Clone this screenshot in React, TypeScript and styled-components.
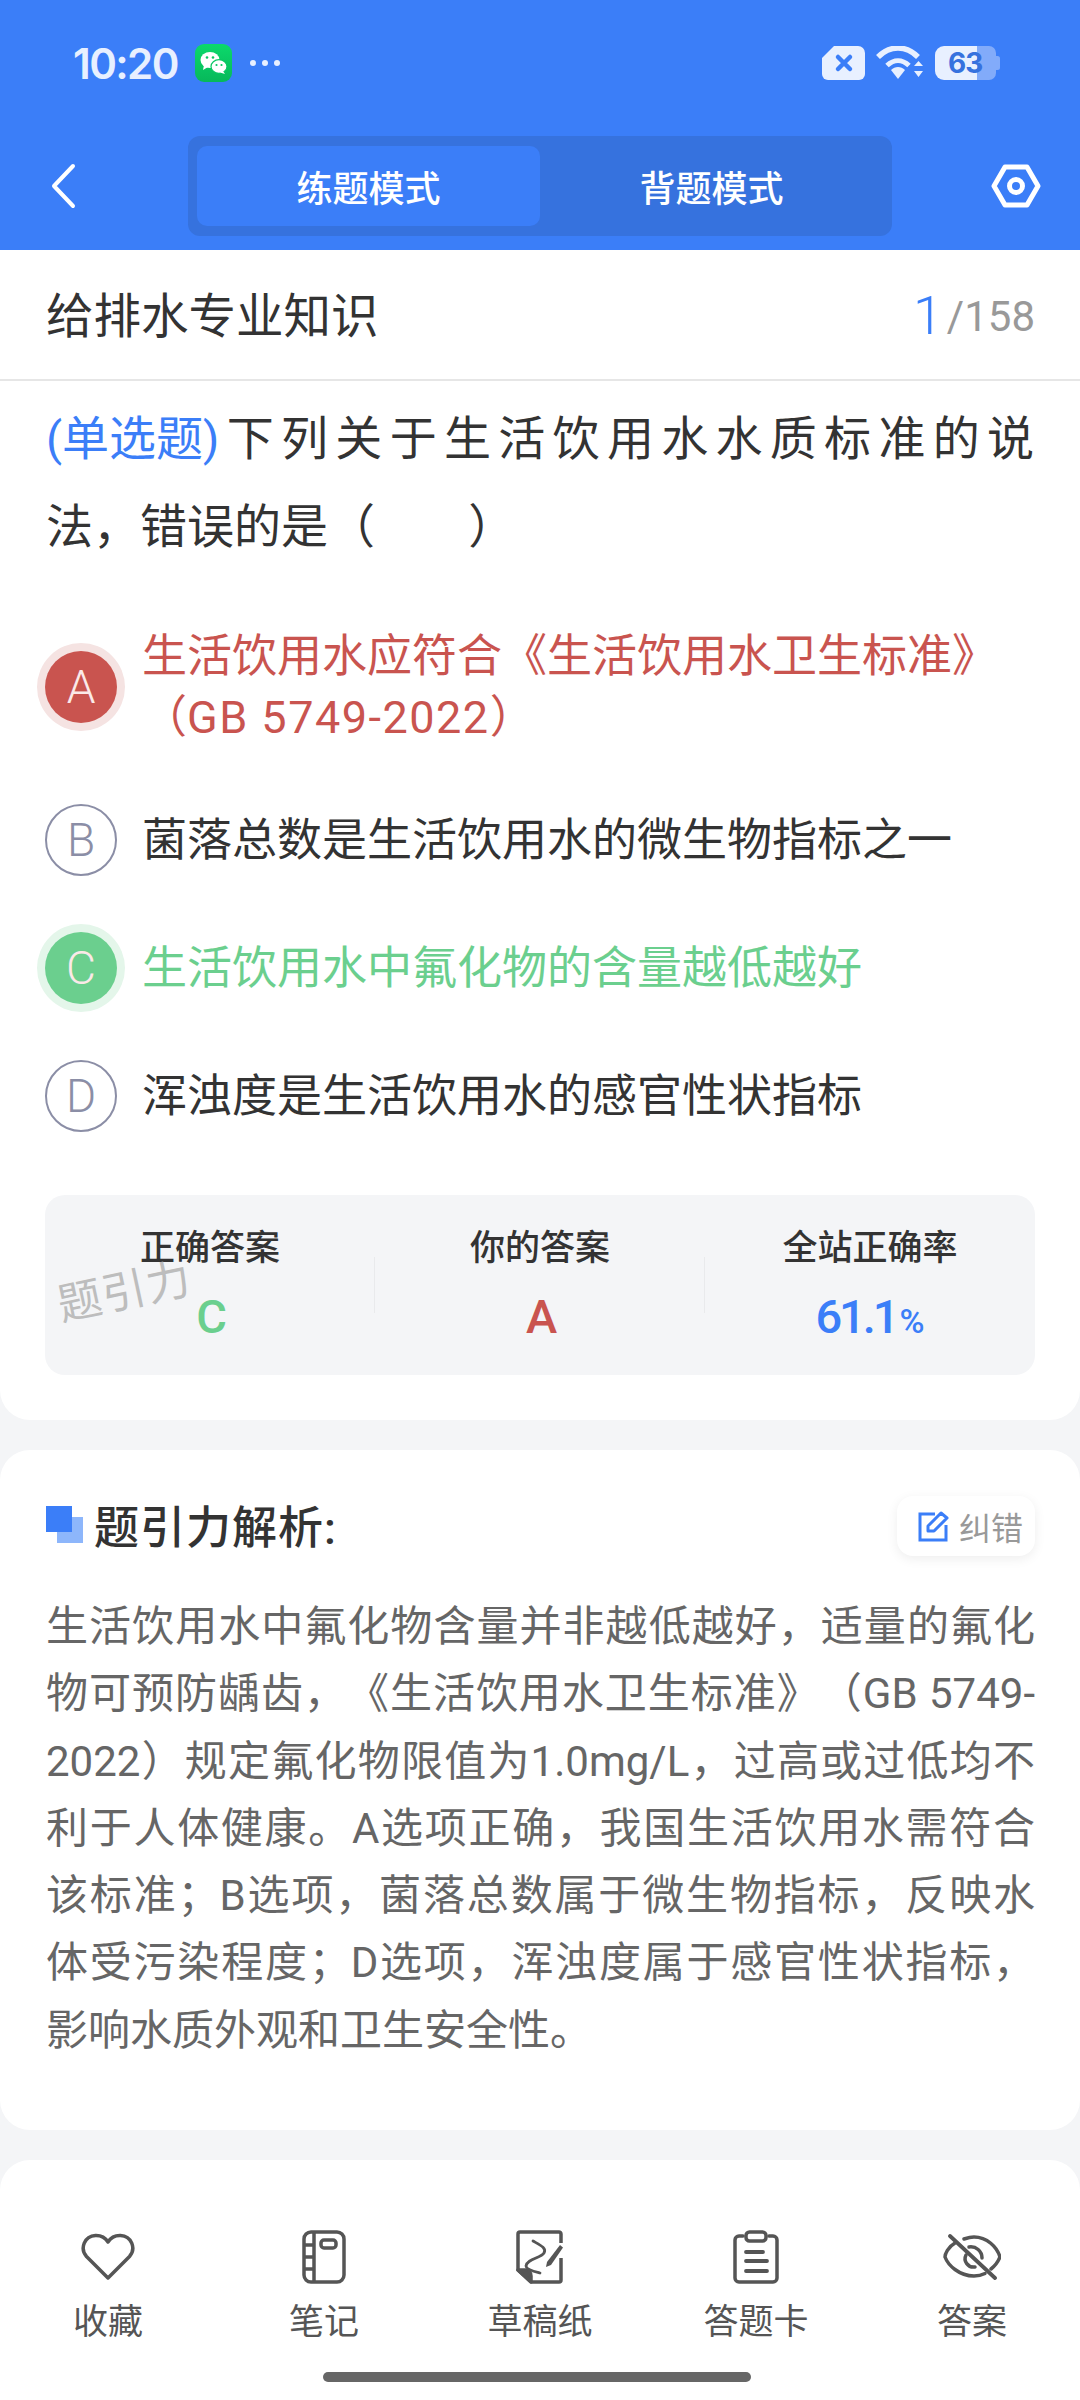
import React from "react";
import styled, { createGlobalStyle } from "styled-components";

const FONT = `Roboto, "Noto Sans CJK SC", "Noto Sans", sans-serif`;
const BLUE = "#3B7EF8";
const RED = "#C9544F";
const GREEN = "#6BCF8E";

const Global = createGlobalStyle`
  html, body { margin: 0; padding: 0; background: #F4F5F7; }
  body { font-family: ${FONT}; text-spacing-trim: space-all; }
  * { box-sizing: border-box; }
`;

const Page = styled.div`
  width: 1080px;
  height: 2400px;
  overflow: hidden;
  display: flex;
  flex-direction: column;
  background: #f4f5f7;
`;
const Header = styled.header`
  background: ${BLUE};
  height: 250px;
  display: flex;
  flex-direction: column;
`;
const StatusBar = styled.div`
  height: 124px;
  padding: 2px 80px 0 73px;
  display: flex;
  align-items: center;
  justify-content: space-between;
  color: #e8f0ff;
`;
const StatusGroup = styled.div<{ $gap: number }>`
  display: flex;
  align-items: center;
  gap: ${(p) => p.$gap}px;
`;
const Time = styled.span`
  font-family: Inter, sans-serif;
  font-size: 42px;
  font-weight: 600;
  letter-spacing: -1.6px;
`;
const BatteryBox = styled.div`
  position: relative;
  display: flex;
  width: 65px;
  height: 34px;
`;
const BatteryLevel = styled.span`
  position: absolute;
  left: 13px;
  top: 0;
  line-height: 34px;
  font-family: Inter, sans-serif;
  font-size: 28px;
  font-weight: 700;
  letter-spacing: -1px;
  color: #3672de;
`;
const NavBar = styled.nav`
  height: 126px;
  padding: 12px 39px 14px 50px;
  display: flex;
  align-items: center;
`;
const Segment = styled.div`
  width: 704px;
  height: 100px;
  margin: 0 auto 0 112px;
  padding: 10px 9px;
  display: flex;
  background: #3672de;
  border-radius: 12px;
`;
const SegmentTab = styled.div<{ $active?: boolean }>`
  flex: 1;
  display: flex;
  align-items: center;
  justify-content: center;
  border-radius: 10px;
  font-size: 36px;
  font-weight: 500;
  color: #fff;
  background: ${(p) => (p.$active ? BLUE : "transparent")};
`;
const QuestionCard = styled.section`
  height: 1170px;
  background: #fff;
  border-radius: 0 0 30px 30px;
`;
const TitleRow = styled.div`
  height: 131px;
  padding: 0 45px 4px 46px;
  border-bottom: 2px solid #e6e6e6;
  display: flex;
  align-items: center;
  justify-content: space-between;
`;
const Subject = styled.h1`
  margin: 0;
  font-size: 47.5px;
  font-weight: 400;
  color: #333;
`;
const Counter = styled.div`
  display: flex;
  align-items: baseline;
  font-size: 42px;
  color: #999;
`;
const CounterCurrent = styled.span`
  font-size: 54px;
  font-weight: 300;
  color: ${BLUE};
  margin-right: 4px;
  transform: translateY(3px);
`;
const Question = styled.div`
  margin: 14px 46px 0;
  font-size: 47px;
  line-height: 88px;
  color: #333;
`;
const QuestionLine = styled.div<{ $justify?: boolean }>`
  text-align: ${(p) => (p.$justify ? "justify" : "left")};
  text-align-last: ${(p) => (p.$justify ? "justify" : "left")};
`;
const QuestionType = styled.span`
  display: inline-block;
  color: ${BLUE};
`;
const Options = styled.div`
  margin-top: 55px;
  padding: 0 45px;
  display: flex;
  flex-direction: column;
  gap: 56px;
`;
const Option = styled.div`
  display: flex;
  align-items: center;
  gap: 25px;
`;
const Bubble = styled.div<{ $tone?: "red" | "green" }>`
  flex: none;
  width: 72px;
  height: 72px;
  border-radius: 50%;
  display: flex;
  align-items: center;
  justify-content: center;
  font-family: Roboto, sans-serif;
  font-size: 46px;
  font-weight: 300;
  color: ${(p) => (p.$tone ? "#fbe9e8" : "#8B8EA6")};
  background: ${(p) => (p.$tone === "red" ? RED : p.$tone === "green" ? GREEN : "#fff")};
  border: ${(p) => (p.$tone ? "none" : "2px solid #8B8EA6")};
  box-shadow: ${(p) =>
    p.$tone === "red"
      ? "0 0 0 8px #F5E3E2"
      : p.$tone === "green"
      ? "0 0 0 8px #E4F6EA"
      : "none"};
`;
const OptionText = styled.div<{ $tone?: "red" | "green" }>`
  flex: 1;
  font-size: 45px;
  line-height: 61px;
  color: ${(p) => (p.$tone === "red" ? RED : p.$tone === "green" ? GREEN : "#333")};
`;
const LatinRun = styled.span`
  letter-spacing: 1.5px;
`;
const StatBox = styled.div`
  position: relative;
  margin: 63px 45px 0;
  height: 180px;
  background: #f4f5f7;
  border-radius: 20px;
  display: grid;
  grid-template-columns: repeat(3, 1fr);
  align-items: center;
`;
const Stat = styled.div<{ $divider?: boolean }>`
  height: 100%;
  padding-top: 32px;
  display: flex;
  flex-direction: column;
  align-items: center;
  gap: 19px;
  position: relative;
  &::after {
    content: "";
    display: ${(p) => (p.$divider ? "block" : "none")};
    position: absolute;
    right: 0;
    top: 62px;
    bottom: 62px;
    width: 1px;
    background: #e9eaec;
  }
`;
const StatLabel = styled.span`
  font-size: 35px;
  font-weight: 500;
  line-height: 44px;
  color: #333;
`;
const StatValue = styled.span<{ $color: string }>`
  font-size: 47px;
  line-height: 54px;
  font-weight: 500;
  letter-spacing: -3px;
  color: ${(p) => p.$color};
`;
const Percent = styled.small`
  font-size: 34px;
  letter-spacing: 0;
  margin-left: 3px;
`;
const Watermark = styled.span`
  position: absolute;
  left: 12px;
  top: 72px;
  font-size: 44px;
  line-height: 50px;
  color: #bdbdbd;
  transform: rotate(-12deg);
  letter-spacing: 1px;
`;
const AnalysisCard = styled.section`
  margin-top: 30px;
  height: 680px;
  padding: 46px 45px 0 46px;
  background: #fff;
  border-radius: 30px;
`;
const AnalysisHead = styled.div`
  height: 60px;
  display: flex;
  align-items: center;
  justify-content: space-between;
`;
const AnalysisTitle = styled.h2`
  margin: -4px 0 0;
  display: flex;
  align-items: center;
  gap: 11px;
  font-size: 45px;
  font-weight: 500;
  letter-spacing: 1px;
  color: #333;
`;
const ReportButton = styled.div`
  width: 138px;
  height: 60px;
  padding-left: 21px;
  display: flex;
  align-items: center;
  gap: 9px;
  border-radius: 16px;
  background: #fff;
  box-shadow: 0 3px 12px rgba(0, 0, 0, 0.07);
  font-size: 32px;
  color: #999;
`;
const AnalysisBody = styled.p`
  margin: 37px 0 0;
  font-size: 42px;
  line-height: 67.3px;
  color: #666;
  text-align: justify;
`;
const BottomBar = styled.footer`
  margin-top: 30px;
  flex: 1;
  background: #fff;
  border-radius: 30px 30px 0 0;
  padding-top: 69px;
  display: flex;
  flex-direction: column;
`;
const Tools = styled.div`
  display: grid;
  grid-template-columns: repeat(5, 216px);
`;
const Tool = styled.div`
  display: flex;
  flex-direction: column;
  align-items: center;
  gap: 15px;
  font-size: 35px;
  line-height: 46px;
  color: #555;
`;
const ToolIcon = styled.div`
  height: 56px;
  display: flex;
  align-items: center;
  justify-content: center;
`;
const HomeBar = styled.div`
  align-self: center;
  margin-top: 26px;
  margin-left: -6px;
  width: 428px;
  height: 10px;
  border-radius: 5px;
  background: #666;
`;

const WeChat = () => (
  <svg width="37" height="38" viewBox="0 0 37 38">
    <defs>
      <linearGradient id="wc" x1="0" y1="0" x2="0" y2="1">
        <stop offset="0" stopColor="#0BD96B" />
        <stop offset="1" stopColor="#07B85A" />
      </linearGradient>
    </defs>
    <rect width="37" height="38" rx="9" fill="url(#wc)" />
    <ellipse cx="15" cy="16" rx="9.5" ry="8" fill="#fff" />
    <path d="M9 21l-1 5 5-3z" fill="#fff" />
    <ellipse cx="24" cy="22.5" rx="8" ry="6.8" fill="#fff" stroke="#0AC763" strokeWidth="1.2" />
    <path d="M28 27l2 3-5-1.500z" fill="#fff" />
    <circle cx="12" cy="13.500" r="1.300" fill="#0AC763" />
    <circle cx="18" cy="13.500" r="1.300" fill="#0AC763" />
    <circle cx="21.500" cy="21" r="1.100" fill="#0AC763" />
    <circle cx="26.500" cy="21" r="1.100" fill="#0AC763" />
  </svg>
);
const Dots = () => (
  <svg width="32" height="8" viewBox="0 0 32 8" fill="#e8f0ff">
    <circle cx="4" cy="4" r="3" />
    <circle cx="16" cy="4" r="3" />
    <circle cx="28" cy="4" r="3" />
  </svg>
);
const Sim = () => (
  <svg width="43" height="34" viewBox="0 0 43 34">
    <path d="M12 0H36a7 7 0 0 1 7 7V28a6 6 0 0 1-6 6H6a6 6 0 0 1-6-6V12z" fill="#e8f0ff" />
    <path d="M16 11l12 12M28 11L16 23" stroke={BLUE} strokeWidth="4.500" strokeLinecap="round" />
  </svg>
);
const Wifi = () => (
  <svg width="48" height="34" viewBox="0 0 48 34" fill="none">
    <path d="M2 11C14-1 30-1 42 11" stroke="#e8f0ff" strokeWidth="5.500" />
    <path d="M11 19.500C18 13 26 13 33 19.500" stroke="#e8f0ff" strokeWidth="5" />
    <path d="M15 24C19 20 25 20 29 24L22 33z" fill="#e8f0ff" />
    <path d="M38 20l4.500-5 4.500 5zM38 25h9l-4.500 6z" fill="#e8f0ff" />
  </svg>
);
const Battery = () => (
  <BatteryBox>
    <svg width="65" height="34" viewBox="0 0 65 34">
      <path d="M42 0H54a7 7 0 0 1 7 7V10h1.500a2.500 2.500 0 0 1 2.500 2.500V21.500a2.500 2.500 0 0 1-2.500 2.500H61V27a7 7 0 0 1-7 7H42z" fill="#82ABFA" />
      <path d="M42 0H9a9 9 0 0 0-9 9V25a9 9 0 0 0 9 9H42z" fill="#e8f0ff" />
    </svg>
    <BatteryLevel>63</BatteryLevel>
  </BatteryBox>
);
const Back = () => (
  <svg width="26" height="46" viewBox="0 0 26 46" fill="none">
    <path d="M23 3L4 23l19 20" stroke="#fff" strokeWidth="4" strokeLinecap="round" strokeLinejoin="round" />
  </svg>
);
const Hex = () => (
  <svg width="50" height="44" viewBox="0 0 50 44" fill="none" stroke="#fff" strokeWidth="5" strokeLinejoin="round">
    <path d="M14 3H36L47 22 36 41H14L3 22z" />
    <circle cx="25" cy="22" r="6.500" />
  </svg>
);
const Squares = () => (
  <svg width="37" height="37" viewBox="0 0 37 37">
    <rect x="11" y="11" width="26" height="26" fill="#8DB6FB" />
    <rect width="26" height="26" fill={BLUE} />
  </svg>
);
const EditIcon = () => (
  <svg width="32" height="32" viewBox="0 0 32 32" fill="none" stroke={BLUE} strokeWidth="3">
    <path d="M17 4H2V30H28V15" />
    <path d="M10 16L23 3l6 5L16 21H10z" strokeLinejoin="round" />
  </svg>
);
const GRAY = "#555";
const HeartIcon = () => (
  <svg width="54" height="48" viewBox="0 0 54 48" fill="none" stroke={GRAY} strokeWidth="3.500" strokeLinejoin="round">
    <path d="M27 45L5.500 23.500C-1.500 15.500 3.500 3 14.500 2.500 20 2.300 24.500 5 27 9c2.500-4 7-6.700 12.500-6.500C50.500 3 55.500 15.500 48.500 23.500z" />
  </svg>
);
const NotebookIcon = () => (
  <svg width="44" height="54" viewBox="0 0 44 54" fill="none" stroke={GRAY} strokeWidth="3.500" strokeLinejoin="round">
    <rect x="2" y="2" width="40" height="50" rx="7" />
    <path d="M12 2V52M2 15H12M2 27H12M2 39H12" />
    <rect x="19" y="10" width="15" height="8" rx="3" />
  </svg>
);
const DraftIcon = () => (
  <svg width="48" height="54" viewBox="0 0 48 54" fill="none" stroke={GRAY} strokeWidth="3.500" strokeLinejoin="round">
    <path d="M45 13V4a2 2 0 0 0-2-2H4A2 2 0 0 0 2 4V40L15 52H43a2 2 0 0 0 2-2V28" />
    <path d="M2 40H10c3 0 5 3 5 6v6z" fill={GRAY} />
    <path d="M17 11C24 15 31 18 28 23 25 28 11 29 10 36 10 40 20 42 24 43" strokeWidth="2.800" strokeLinecap="round" />
    <path d="M31 32L44 15l3 2.500L35 35l-5 2z" fill={GRAY} stroke="none" />
  </svg>
);
const ClipboardIcon = () => (
  <svg width="46" height="54" viewBox="0 0 46 54" fill="none" stroke={GRAY} strokeWidth="3.500" strokeLinecap="round" strokeLinejoin="round">
    <path d="M10 6H6a4 4 0 0 0-4 4V48a4 4 0 0 0 4 4H40a4 4 0 0 0 4-4V10a4 4 0 0 0-4-4H36" />
    <rect x="13" y="2" width="20" height="9" rx="3.500" />
    <path d="M13 22H30M13 31H34M13 41H34" strokeWidth="3.800" />
  </svg>
);
const EyeOffIcon = () => (
  <svg width="58" height="46" viewBox="0 0 58 46" fill="none" stroke={GRAY} strokeWidth="3.500" strokeLinecap="round">
    <path d="M12 9C5 13 2 20 2 23c3 8 14 19 29 19 4 0 8-1 11-2.500" />
    <path d="M21 5c3-1 6-2 10-2 13 0 23 10 26 20-2 5-5 9-9 12" />
    <path d="M23 21c-3 6 2 13 9 12M26 13c7-1 13 4 13 11" />
    <path d="M7 2L52 44" strokeWidth="3.800" />
  </svg>
);

const tools = [
  { label: "收藏", icon: <HeartIcon /> },
  { label: "笔记", icon: <NotebookIcon /> },
  { label: "草稿纸", icon: <DraftIcon /> },
  { label: "答题卡", icon: <ClipboardIcon /> },
  { label: "答案", icon: <EyeOffIcon /> },
];

const options: { key: string; text: string; code?: string; tone?: "red" | "green" }[] = [
  { key: "A", text: "生活饮用水应符合《生活饮用水卫生标准》", code: "GB 5749-2022", tone: "red" },
  { key: "B", text: "菌落总数是生活饮用水的微生物指标之一" },
  { key: "C", text: "生活饮用水中氟化物的含量越低越好", tone: "green" },
  { key: "D", text: "浑浊度是生活饮用水的感官性状指标" },
];

const analysisText =
  "生活饮用水中氟化物含量并非越低越好\uFF0C适量的氟化物可预防龋齿\uFF0C《生活饮用水卫生标准》\uFF08GB 5749-2022\uFF09规定氟化物限值为1.0mg/L\uFF0C过高或过低均不利于人体健康。A选项正确\uFF0C我国生活饮用水需符合该标准\uFF1BB选项\uFF0C菌落总数属于微生物指标\uFF0C反映水体受污染程度\uFF1BD选项\uFF0C浑浊度属于感官性状指标\uFF0C影响水质外观和卫生安全性。";

export default function App() {
  return (
    <Page>
      <Global />
      <Header>
        <StatusBar>
          <StatusGroup $gap={17}>
            <Time>10:20</Time>
            <WeChat />
            <Dots />
          </StatusGroup>
          <StatusGroup $gap={11}>
            <Sim />
            <Wifi />
            <Battery />
          </StatusGroup>
        </StatusBar>
        <NavBar>
          <Back />
          <Segment>
            <SegmentTab $active>练题模式</SegmentTab>
            <SegmentTab>背题模式</SegmentTab>
          </Segment>
          <Hex />
        </NavBar>
      </Header>
      <QuestionCard>
        <TitleRow>
          <Subject>给排水专业知识</Subject>
          <Counter>
            <CounterCurrent>1</CounterCurrent>/158
          </Counter>
        </TitleRow>
        <Question>
          <QuestionLine $justify>
            <QuestionType>(单选题)</QuestionType>下列关于生活饮用水水质标准的说
          </QuestionLine>
          <QuestionLine>
            {"法\uFF0C错误的是\uFF08\u00A0\u00A0\u00A0\u00A0\u00A0\u00A0\u00A0\u00A0\uFF09"}
          </QuestionLine>
        </Question>
        <Options>
          {options.map((o) => (
            <Option key={o.key}>
              <Bubble $tone={o.tone}>{o.key}</Bubble>
              <OptionText $tone={o.tone}>
                {o.text}
                {o.code && (
                  <>
                    {"\uFF08"}
                    <LatinRun>{o.code}</LatinRun>
                    {"\uFF09"}
                  </>
                )}
              </OptionText>
            </Option>
          ))}
        </Options>
        <StatBox>
          <Stat $divider>
            <StatLabel>正确答案</StatLabel>
            <StatValue $color={GREEN}>C</StatValue>
          </Stat>
          <Stat $divider>
            <StatLabel>你的答案</StatLabel>
            <StatValue $color={RED}>A</StatValue>
          </Stat>
          <Stat>
            <StatLabel>全站正确率</StatLabel>
            <StatValue $color={BLUE}>
              61.1<Percent>%</Percent>
            </StatValue>
          </Stat>
          <Watermark>题引力</Watermark>
        </StatBox>
      </QuestionCard>
      <AnalysisCard>
        <AnalysisHead>
          <AnalysisTitle>
            <Squares />
            题引力解析:
          </AnalysisTitle>
          <ReportButton>
            <EditIcon />
            纠错
          </ReportButton>
        </AnalysisHead>
        <AnalysisBody>{analysisText}</AnalysisBody>
      </AnalysisCard>
      <BottomBar>
        <Tools>
          {tools.map((t) => (
            <Tool key={t.label}>
              <ToolIcon>{t.icon}</ToolIcon>
              {t.label}
            </Tool>
          ))}
        </Tools>
        <HomeBar />
      </BottomBar>
    </Page>
  );
}
